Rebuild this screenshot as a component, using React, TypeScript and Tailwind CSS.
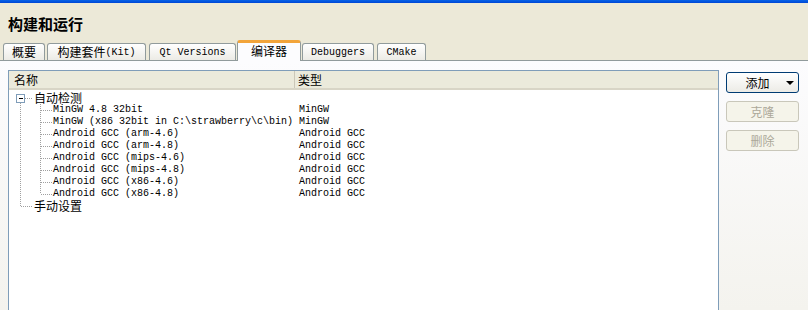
import React from 'react';

const cjk = "font-['Noto_Sans_CJK_SC','Noto_Sans',sans-serif]";
const mono = "font-['Liberation_Mono','DejaVu_Sans_Mono',monospace]";

type Tab = { label: React.ReactNode; w: string; ml: string; active?: boolean };

const tabs: Tab[] = [
  { label: <span className="text-[12px]">概要</span>, w: 'w-[42px]', ml: 'ml-[3px]' },
  {
    label: (
      <>
        <span className="text-[12px]">构建套件</span>
        <span className={`${mono} text-[10px]`}>(Kit)</span>
      </>
    ),
    w: 'w-[99px]',
    ml: 'ml-[2px]',
  },
  { label: <span className={`${mono} text-[10px]`}>Qt Versions</span>, w: 'w-[87px]', ml: 'ml-[3px]' },
  { label: <span className="text-[12px]">编译器</span>, w: 'w-[64px]', ml: 'ml-px', active: true },
  { label: <span className={`${mono} text-[10px]`}>Debuggers</span>, w: 'w-[72px]', ml: 'ml-px' },
  { label: <span className={`${mono} text-[10px]`}>CMake</span>, w: 'w-[49px]', ml: 'ml-[3px]' },
];

const compilers = [
  ['MinGW 4.8 32bit', 'MinGW'],
  ['MinGW (x86 32bit in C:\\strawberry\\c\\bin)', 'MinGW'],
  ['Android GCC (arm-4.6)', 'Android GCC'],
  ['Android GCC (arm-4.8)', 'Android GCC'],
  ['Android GCC (mips-4.6)', 'Android GCC'],
  ['Android GCC (mips-4.8)', 'Android GCC'],
  ['Android GCC (x86-4.6)', 'Android GCC'],
  ['Android GCC (x86-4.8)', 'Android GCC'],
];

const TreeLines: React.FC = () => {
  const childYs = compilers.map((_, i) => 20.5 + i * 12);
  return (
    <svg className="absolute left-0 top-0" width="60" height="130" shapeRendering="crispEdges">
      <g stroke="#a0a0a0" strokeDasharray="1 1" fill="none">
        <line x1="16" y1="8.5" x2="23" y2="8.5" />
        <line x1="11.5" y1="13" x2="11.5" y2="116" />
        <line x1="11.5" y1="116.5" x2="23" y2="116.5" />
        <line x1="31.5" y1="14" x2="31.5" y2="104" />
        {childYs.map((y) => (
          <line key={y} x1="32" y1={y} x2="43" y2={y} />
        ))}
      </g>
      <rect x="7.5" y="4.5" width="8" height="8" fill="#fff" stroke="#7f9db9" />
      <line x1="9.5" y1="8.5" x2="14" y2="8.5" stroke="#000" />
    </svg>
  );
};

const Row: React.FC<{ indent: string; name: React.ReactNode; type?: string }> = ({ indent, name, type }) => (
  <div className="flex h-[12px] items-center leading-[12px] text-black">
    <div className={`w-[286px] whitespace-nowrap ${indent}`}>{name}</div>
    <div className={`${mono} pl-[4px] text-[10px]`}>{type}</div>
  </div>
);

const App: React.FC = () => {
  return (
    <div className={`${cjk} flex h-[310px] w-[808px] flex-col overflow-hidden bg-[#ece9d8] text-black`}>
      <div className="h-[3px] shrink-0 bg-gradient-to-b from-[#0a63e8] to-[#0046d5]" />
      <div className="h-[37px] shrink-0 pl-2 pt-[11px] text-[15px] font-bold leading-[20px]">构建和运行</div>

      <div className="relative z-10 -mb-px flex h-[21px] shrink-0 items-end">
        {tabs.map((t, i) =>
          t.active ? (
            <div
              key={i}
              className={`${t.w} ${t.ml} flex h-[21px] items-center justify-center rounded-t-[3px] border-x border-t-[3px] border-x-[#919b9c] border-t-[#f2a43a] bg-[#fcfcfe] pb-[2px]`}
            >
              {t.label}
            </div>
          ) : (
            <div
              key={i}
              className={`${t.w} ${t.ml} mb-px flex h-[17px] items-center justify-center rounded-t-[3px] border-x border-t border-[#919b9c] bg-gradient-to-b from-[#ffffff] to-[#ecebe5]`}
            >
              {t.label}
            </div>
          )
        )}
      </div>

      <div className="flex min-h-0 flex-1 gap-[7px] border-t border-[#919b9c] bg-gradient-to-b from-[#fcfcfe] to-[#f4f3ee] pl-2 pt-[9px]">
        <div className="flex h-[260px] w-[711px] shrink-0 flex-col border border-[#7f9db9] bg-white">
          <div className="flex h-[19px] shrink-0 items-center border-b-2 border-[#d8d5c6] bg-[#ebeadb] text-[12px]">
            <div className="flex h-full w-[286px] items-center border-r border-[#cbc7b8] pl-[5px]">名称</div>
            <div className="pl-[3px]">类型</div>
          </div>
          <div className="relative pt-[2px] text-[12px]">
            <TreeLines />
            <Row indent="pl-[25px]" name={<span>自动检测</span>} />
            {compilers.map(([n, t]) => (
              <Row key={n} indent={`pl-[44px] ${mono} text-[10px]`} name={n} type={t} />
            ))}
            <Row indent="pl-[25px]" name={<span>手动设置</span>} />
          </div>
        </div>

        <div className="mt-[2px] flex w-[73px] shrink-0 flex-col gap-[8px] text-[12px]">
          <div className="relative flex h-[21px] items-center justify-center rounded-[3px] border border-[#003c74] bg-gradient-to-b from-[#ffffff] to-[#ecebe6]">
            <span className="pr-[10px]">添加</span>
            <span className="absolute right-[4px] top-[8px] h-0 w-0 border-x-[4px] border-t-[4px] border-x-transparent border-t-black" />
          </div>
          <div className="flex h-[21px] items-center justify-center rounded-[3px] border border-[#c9c7ba] bg-[#f5f4ea] text-[#aca899]">
            克隆
          </div>
          <div className="flex h-[21px] items-center justify-center rounded-[3px] border border-[#c9c7ba] bg-[#f5f4ea] text-[#aca899]">
            删除
          </div>
        </div>
      </div>
    </div>
  );
};

export default App;
